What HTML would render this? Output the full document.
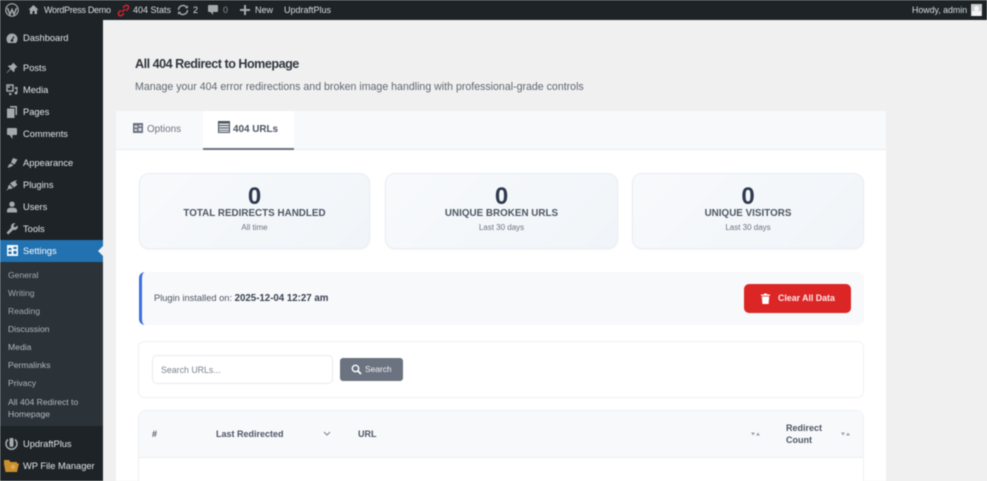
<!DOCTYPE html>
<html style="background:#f0f0f1"><head><meta charset="utf-8"><style>
html,body{margin:0;padding:0;width:987px;height:481px;overflow:hidden;background:#f0f0f1}
body{font-family:"Liberation Sans",sans-serif;position:relative;filter:blur(.4px)}
.a{position:absolute;white-space:nowrap}
#bar{left:0;top:0;width:987px;height:20px;background:#1d2327}
#bar .a{color:#dcdfe2;font-size:9px;line-height:20px;top:0}
#side{left:0;top:20px;width:103px;height:461px;background:#1d2327}
.m{position:absolute;left:23px;color:#e3e5e7;font-size:9.3px;line-height:12px;white-space:nowrap}
.s{position:absolute;left:8px;color:#a4a9ae;font-size:8.6px;line-height:12px;white-space:nowrap}
svg{position:absolute;display:block}
.card{position:absolute;top:173px;width:229px;height:74px;border:1px solid #e9edf3;border-radius:10px;background:linear-gradient(135deg,#f8fafc,#f1f5f9);box-shadow:0 1px 2px rgba(0,0,0,.04)}
.card .n{position:absolute;left:0;right:0;top:9px;text-align:center;font-size:24px;line-height:27px;font-weight:bold;color:#2f3a4e}
.card .l{position:absolute;left:0;right:0;top:34px;text-align:center;font-size:9.8px;line-height:12px;font-weight:bold;color:#4b5563;letter-spacing:.03px}
.card .t{position:absolute;left:0;right:0;top:49px;text-align:center;font-size:8px;line-height:10px;color:#6b7280}
</style></head><body>
<div class="a" style="left:0;top:20px;width:987px;height:461px;background:#f0f0f1"></div>
<div id="bar" class="a">
<svg style="left:5px;top:3px" width="14" height="14" viewBox="0 0 14 14"><circle cx="7" cy="7" r="6.2" fill="none" stroke="#a7aaad" stroke-width="1.2"/><path d="M2.5 5 5 11.5 7 6.5 9 11.5 11.5 5" fill="none" stroke="#a7aaad" stroke-width="1.5"/></svg>
<svg style="left:28px;top:4px" width="11" height="11" viewBox="0 0 11 11"><path d="M5.5 1 .5 5.8H2V10H4.500V7H6.500V10H9V5.800H10.500Z" fill="#a7aaad"/></svg>
<div class="a" style="left:44px;letter-spacing:-.3px">WordPress Demo</div>
<svg style="left:117px;top:4px" width="13" height="13" viewBox="0 0 13 13"><path d="M5 8 8 5M6 3.500 8 1.800a2 2 0 0 1 3 3L9.200 6.800M7 9.500 5 11.200a2 2 0 0 1-3-3L3.800 6.200" fill="none" stroke="#c9252f" stroke-width="1.600"/></svg>
<div class="a" style="left:133px">404 Stats</div>
<svg style="left:177px;top:4px" width="12" height="12" viewBox="0 0 12 12"><path d="M1.500 6a4.500 4.500 0 0 1 8-2.800M10.500 6a4.500 4.500 0 0 1-8 2.800" fill="none" stroke="#a7aaad" stroke-width="1.400"/><path d="M8 4.200h3v-3ZM4 7.800H1v3Z" fill="#a7aaad"/></svg>
<div class="a" style="left:193px">2</div>
<svg style="left:208px;top:5px" width="10" height="10" viewBox="0 0 10 10"><path d="M1 0H9Q10 0 10 1V6Q10 7 9 7H5V10L2.500 7H1Q0 7 0 6V1Q0 0 1 0Z" fill="#a7aaad"/></svg>
<div class="a" style="left:223px;color:#8a8f94">0</div>
<svg style="left:240px;top:5px" width="10" height="10" viewBox="0 0 10 10"><path d="M4 0H6V4H10V6H6V10H4V6H0V4H4Z" fill="#a7aaad"/></svg>
<div class="a" style="left:255px">New</div>
<div class="a" style="left:284px">UpdraftPlus</div>
<div class="a" style="left:912px;font-size:8.800px">Howdy, admin</div>
<div class="a" style="left:971px;top:4px;width:11px;height:12px;background:#c9cccf"><div class="a" style="left:3px;top:2px;width:5px;height:5px;border-radius:50%;background:#f4f4f4"></div><div class="a" style="left:1px;top:7px;width:9px;height:5px;background:#f4f4f4"></div></div>
</div>

<div id="side" class="a"></div>
<div class="a" style="left:0;top:240px;width:103px;height:22px;background:#2271b1"></div>
<div class="a" style="left:0;top:262px;width:103px;height:164px;background:#2c3338"></div>
<div class="a" style="left:98px;top:246px;width:0;height:0;border:5px solid transparent;border-right-color:#f0f0f1;border-left:0"></div>

<svg style="left:6px;top:33px" width="12" height="11" viewBox="0 0 12 11"><path d="M6 .5A5.500 5.500 0 0 0 .5 6C.5 7.600 1.100 9 2.100 10H9.900C10.900 9 11.500 7.600 11.500 6A5.500 5.500 0 0 0 6 .5Z" fill="#a7aaad"/><path d="M6 7 8 3.500" stroke="#1d2327" stroke-width="1.200"/><circle cx="6" cy="7.500" r="1.300" fill="#1d2327"/></svg>
<div class="m" style="top:32px">Dashboard</div>
<svg style="left:6px;top:62px" width="12" height="12" viewBox="0 0 12 12"><path d="M7 .5 11.500 5 10 5.500 8.500 7.500 8.500 9.500 7.500 10 4.800 7.300 1 11 .5 10.800 4.500 6.500 2 4.500 2.500 3.500 4.500 3.500 6.500 2Z" fill="#a7aaad"/></svg>
<div class="m" style="top:62px">Posts</div>
<svg style="left:6px;top:84px" width="12" height="12" viewBox="0 0 12 12"><path d="M1 1H7V7H1Z" fill="none" stroke="#a7aaad" stroke-width="1.500"/><circle cx="3" cy="3" r="1" fill="#a7aaad"/><path d="M9 3h2.500V9a1.500 1.500 0 1 1-1-1.400V5H9ZM3 9h2.500v1a1.200 1.200 0 1 1-2.500 0Z" fill="#a7aaad"/></svg>
<div class="m" style="top:84px">Media</div>
<svg style="left:7px;top:106px" width="10" height="12" viewBox="0 0 10 12"><path d="M3 0H10V9H8.500V1.500H3Z" fill="#a7aaad"/><path d="M0 2.500H7.500V12H0Z" fill="#a7aaad"/></svg>
<div class="m" style="top:106px">Pages</div>
<svg style="left:7px;top:128px" width="10" height="11" viewBox="0 0 10 11"><path d="M1 0H9Q10 0 10 1V6Q10 7 9 7H5.500V11L2.500 7H1Q0 7 0 6V1Q0 0 1 0Z" fill="#a7aaad"/></svg>
<div class="m" style="top:128px">Comments</div>
<svg style="left:6px;top:157px" width="12" height="12" viewBox="0 0 12 12"><path d="M7 1 11.500 2.500 8.500 7.500 5 5.500ZM4.500 6.500 7.500 8 5.500 9.500 1.500 11 3 7.500Z" fill="#a7aaad"/></svg>
<div class="m" style="top:157px">Appearance</div>
<svg style="left:6px;top:179px" width="12" height="12" viewBox="0 0 12 12"><path d="M7 2.500 11 1 9.500 3.500 11.500 5.500 8 8.500 4 4.500 6 3ZM3.500 5.500 7 9 4.500 10H2.500L1 11.500 .5 11 2 9.500V7.500Z" fill="#a7aaad"/></svg>
<div class="m" style="top:179px">Plugins</div>
<svg style="left:6px;top:201px" width="12" height="12" viewBox="0 0 12 12"><circle cx="6" cy="3.200" r="2.700" fill="#a7aaad"/><path d="M1 11.500V9.500Q1 7.300 4 6.800H8Q11 7.300 11 9.500V11.500Z" fill="#a7aaad"/></svg>
<div class="m" style="top:201px">Users</div>
<svg style="left:6px;top:223px" width="12" height="12" viewBox="0 0 12 12"><path d="M11.500 2.500 9.300 4.300 7.800 3.700 7.500 2.200 9.500.500A3.200 3.200 0 0 0 5.200 4.600L.500 9.800 2.200 11.500 7.400 6.800A3.200 3.200 0 0 0 11.500 2.500Z" fill="#a7aaad"/></svg>
<div class="m" style="top:223px">Tools</div>
<svg style="left:7px;top:245px" width="11" height="11" viewBox="0 0 11 11"><path d="M0 0H11V11H0Z" fill="#f4f8fb"/><path d="M1.500 3H4.500V5H1.500ZM6.500 6H9.500V9H6.500ZM1.500 6.500H4.500V9H1.500ZM6.500 2H9.500V4H6.500Z" fill="#2271b1"/></svg>
<div class="m" style="top:245px;color:#fff">Settings</div>
<div class="s" style="top:269px">General</div>
<div class="s" style="top:287px">Writing</div>
<div class="s" style="top:305px">Reading</div>
<div class="s" style="top:323px;color:#b4b9be">Discussion</div>
<div class="s" style="top:341px;color:#b4b9be">Media</div>
<div class="s" style="top:359px;color:#b4b9be">Permalinks</div>
<div class="s" style="top:377px;color:#b4b9be">Privacy</div>
<div class="s" style="top:396px;color:#b4b9be">All 404 Redirect to</div>
<div class="s" style="top:408px;color:#b4b9be">Homepage</div>
<svg style="left:5px;top:438px" width="13" height="13" viewBox="0 0 13 13"><path d="M3 1.500A5.500 5.500 0 1 0 10 1.500" fill="none" stroke="#a7aaad" stroke-width="1.500"/><path d="M4.500 1.500a2 2 0 0 1 4 0V7a2 2 0 0 1-4 0Z" fill="#a7aaad"/></svg>
<div class="m" style="top:438px">UpdraftPlus</div>
<svg style="left:4px;top:460px" width="15" height="12" viewBox="0 0 15 12"><path d="M0 0H5L6.500 2H13V3.500H15L13 12H1.500L0 4Z" fill="#cb8f2e"/><circle cx="9" cy="7" r="2.200" fill="#e0ab55"/></svg>
<div class="m" style="top:460px">WP File Manager</div>

<div class="a" style="left:135px;top:56px;font-size:12.600px;line-height:16px;font-weight:bold;color:#30363d;letter-spacing:-.5px">All 404 Redirect to Homepage</div>
<div class="a" style="left:135px;top:80px;font-size:10.600px;line-height:14px;color:#5f6670">Manage your 404 error redirections and broken image handling with professional-grade controls</div>

<div class="a" style="left:116px;top:111px;width:770px;height:370px;background:#fff"></div>
<div class="a" style="left:116px;top:111px;width:770px;height:38px;background:#f8f9fb;border-bottom:1px solid #e9ecf0"></div>
<div class="a" style="left:203px;top:111px;width:91px;height:37px;background:#fff;border-bottom:2px solid #6b7280"></div>
<svg style="left:133px;top:123px" width="10" height="10" viewBox="0 0 10 10"><path d="M0 0H10V10H0Z" fill="#6b7280"/><path d="M1.500 2.500H4.500V4.500H1.500ZM5.500 5H8.500V8H5.500ZM1.500 6H4V8H1.500ZM6 2H8.500V3.500H6Z" fill="#d8dbe0"/></svg>
<div class="a" style="left:147px;top:123px;font-size:9.900px;line-height:13px;color:#6b7280">Options</div>
<svg style="left:218px;top:121px" width="12" height="12" viewBox="0 0 12 12"><path d="M0 0H12V12H0Z" fill="#4b5563"/><path d="M1 2.500H11V4H1ZM1 5H11V6.500H1ZM1 7.500H11V9H1ZM1 9.800H11V11H1Z" fill="#e3e5e8"/></svg>
<div class="a" style="left:233px;top:123px;font-size:9.900px;line-height:13px;font-weight:bold;color:#4b5563">404 URLs</div>

<div class="card" style="left:139px"><div class="n">0</div><div class="l">TOTAL REDIRECTS HANDLED</div><div class="t">All time</div></div>
<div class="card" style="left:385px;width:231px"><div class="n">0</div><div class="l">UNIQUE BROKEN URLS</div><div class="t">Last 30 days</div></div>
<div class="card" style="left:632px;width:230px"><div class="n">0</div><div class="l">UNIQUE VISITORS</div><div class="t">Last 30 days</div></div>

<div class="a" style="left:139px;top:272px;width:722px;height:53px;background:#f8f9fb;border-left:3px solid #3b6fe0;border-radius:6px"></div>
<div class="a" style="left:154px;top:292px;font-size:9.300px;line-height:12px;color:#4b5563">Plugin installed on: <b style="color:#374151;font-size:9.700px">2025-12-04 12:27 am</b></div>
<div class="a" style="left:744px;top:284px;width:107px;height:29px;background:#dc2626;border-radius:5px"></div>
<svg style="left:761px;top:293px" width="9" height="11" viewBox="0 0 9 11"><path d="M0 1.500H3V.500H6V1.500H9V2.800H0ZM.800 3.500H8.200L7.600 11H1.400Z" fill="#fff"/></svg>
<div class="a" style="left:778px;top:292px;font-size:8.800px;line-height:12px;font-weight:bold;color:#fdeaea">Clear All Data</div>

<div class="a" style="left:138px;top:341px;width:724px;height:55px;border:1px solid #f0f2f5;border-radius:6px;background:#fff"></div>
<div class="a" style="left:152px;top:355px;width:179px;height:27px;border:1px solid #e9ebef;border-radius:5px;background:#fff"></div>
<div class="a" style="left:161px;top:364px;font-size:8.800px;line-height:12px;color:#7b828c">Search URLs...</div>
<div class="a" style="left:340px;top:358px;width:63px;height:23px;background:#6b7280;border-radius:3px"></div>
<svg style="left:351px;top:364px" width="11" height="11" viewBox="0 0 11 11"><circle cx="4.500" cy="4.500" r="3.200" fill="none" stroke="#fff" stroke-width="1.400"/><path d="M7 7 10 10" stroke="#fff" stroke-width="1.800"/></svg>
<div class="a" style="left:365px;top:362.500px;font-size:8.400px;line-height:12px;color:#f1f2f4">Search</div>

<div class="a" style="left:138px;top:410px;width:724px;height:71px;border:1px solid #eef0f3;border-bottom:0;border-radius:8px 8px 0 0;background:#fff"></div>
<div class="a" style="left:139px;top:411px;width:724px;height:46px;background:#f8f9fb;border-bottom:1px solid #eceef2;border-radius:8px 8px 0 0"></div>
<div class="a" style="left:152px;top:428px;font-size:9px;line-height:12px;font-weight:bold;color:#4b5563">#</div>
<div class="a" style="left:216px;top:428px;font-size:9px;line-height:12px;font-weight:bold;color:#4b5563">Last Redirected</div>
<svg style="left:323px;top:431px" width="8" height="6" viewBox="0 0 8 6"><path d="M1 1 4 4 7 1" fill="none" stroke="#7b828c" stroke-width="1"/></svg>
<div class="a" style="left:358px;top:428px;font-size:9px;line-height:12px;font-weight:bold;color:#4b5563">URL</div>
<svg style="left:751px;top:431px" width="9" height="6" viewBox="0 0 9 6"><path d="M0 1.500H4L2 4.500ZM5 4.500H9L7 1.500Z" fill="#9aa0a8"/></svg>
<div class="a" style="left:786px;top:422px;font-size:9px;line-height:12px;font-weight:bold;color:#4b5563">Redirect</div>
<div class="a" style="left:786px;top:434px;font-size:9px;line-height:12px;font-weight:bold;color:#4b5563">Count</div>
<svg style="left:841px;top:431px" width="9" height="6" viewBox="0 0 9 6"><path d="M0 1.500H4L2 4.500ZM5 4.500H9L7 1.500Z" fill="#9aa0a8"/></svg>
</body></html>
